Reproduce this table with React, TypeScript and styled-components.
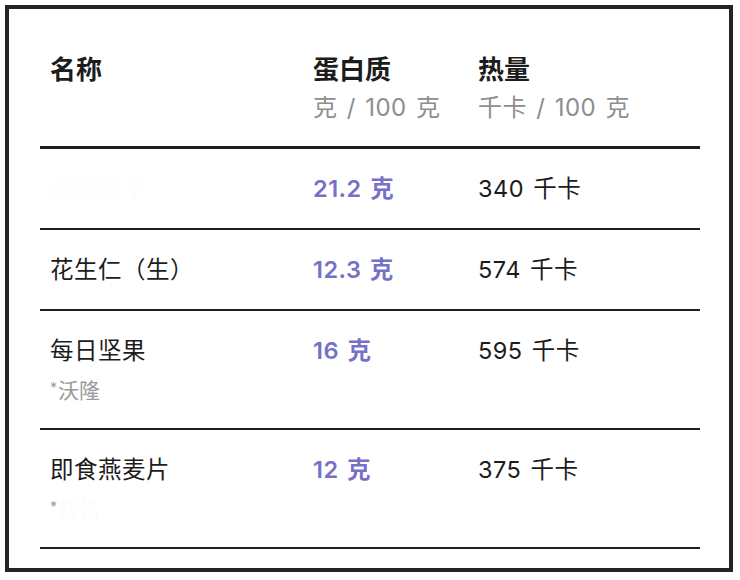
import React from "react";
import styled, { createGlobalStyle } from "styled-components";

const Global = createGlobalStyle`
  html, body { margin: 0; padding: 0; background: #fff; }
  body { font-family: Inter, "Noto Sans CJK SC", sans-serif; color: #1a1a1a; }
`;

const Frame = styled.div`
  box-sizing: border-box;
  margin: 5px 0 0 5px;
  width: 728px;
  height: 567px;
  border: 4px solid #242424;
  padding: 42px 29px 0 31px;
  background: #fff;
`;

const Table = styled.table`
  width: 100%;
  border-collapse: collapse;
  table-layout: fixed;
`;

const Th = styled.th<{ $w?: number }>`
  text-align: left;
  vertical-align: top;
  padding: 0 0 19px 10px;
  width: ${(p) => (p.$w ? `${p.$w}px` : "auto")};
  border-bottom: 3px solid #1e1e1e;
  font-weight: 700;
`;

const HeadTitle = styled.div`
  font-size: 26px;
  line-height: 38px;
  color: #1c1c1c;
`;

const HeadUnit = styled.div`
  font-size: 24px;
  line-height: 38px;
  font-weight: 400;
  color: #8e8e8e;
  letter-spacing: 0.5px;
  word-spacing: 2px;
`;

const Tr = styled.tr`
  border-bottom: 2px solid #1e1e1e;
`;

const Td = styled.td`
  vertical-align: top;
  padding: 21px 0 20px 10px;
  font-size: 23.5px;
  line-height: 38px;
`;

const Name = styled.div<{ $hidden?: boolean }>`
  color: ${(p) => (p.$hidden ? "#fdfdfd" : "#1c1c1c")};
  letter-spacing: 0.5px;
`;

const Brand = styled.div`
  color: #9a9a9a;
  font-size: 21px;
  line-height: 36px;
  margin-bottom: -1px;
`;

const Star = styled.span`
  font-size: 14px;
  vertical-align: 5px;
  margin-right: 1px;
`;

const Masked = styled.span`
  color: #fcfcfc;
`;

const Protein = styled.span`
  color: #7670c8;
  font-weight: 600;
  letter-spacing: 0.5px;
  word-spacing: 2px;
`;

const Cal = styled.span`
  color: #1c1c1c;
  letter-spacing: 0.5px;
  word-spacing: 2px;
`;

type Row = { name: string; hidden?: boolean; brand?: string; maskedBrand?: boolean; protein: string; cal: string };

const rows: Row[] = [
  { name: "鸡胸肉干", hidden: true, protein: "21.2 克", cal: "340 千卡" },
  { name: "花生仁（生）", protein: "12.3 克", cal: "574 千卡" },
  { name: "每日坚果", brand: "沃隆", protein: "16 克", cal: "595 千卡" },
  { name: "即食燕麦片", brand: "桂格", maskedBrand: true, protein: "12 克", cal: "375 千卡" },
];

export default function App() {
  return (
    <>
      <Global />
      <Frame>
        <Table>
          <thead>
            <tr>
              <Th $w={253}>
                <HeadTitle>名称</HeadTitle>
              </Th>
              <Th $w={155}>
                <HeadTitle>蛋白质</HeadTitle>
                <HeadUnit>克 / 100 克</HeadUnit>
              </Th>
              <Th>
                <HeadTitle>热量</HeadTitle>
                <HeadUnit>千卡 / 100 克</HeadUnit>
              </Th>
            </tr>
          </thead>
          <tbody>
            {rows.map((r) => (
              <Tr key={r.name}>
                <Td>
                  <Name $hidden={r.hidden}>{r.name}</Name>
                  {r.brand && (
                    <Brand>
                      <Star>*</Star>
                      {r.maskedBrand ? <Masked>{r.brand}</Masked> : r.brand}
                    </Brand>
                  )}
                </Td>
                <Td>
                  <Protein>{r.protein}</Protein>
                </Td>
                <Td>
                  <Cal>{r.cal}</Cal>
                </Td>
              </Tr>
            ))}
          </tbody>
        </Table>
      </Frame>
    </>
  );
}
